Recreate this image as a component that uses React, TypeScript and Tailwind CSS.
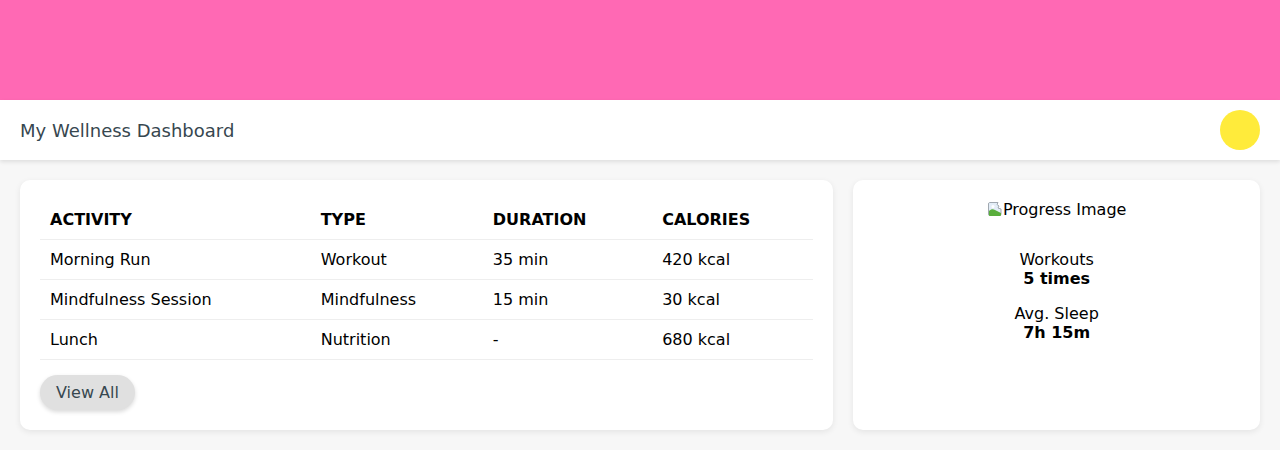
const rows = [
  { activity: 'Morning Run', type: 'Workout', duration: '35 min', calories: '420 kcal' },
  { activity: 'Mindfulness Session', type: 'Mindfulness', duration: '15 min', calories: '30 kcal' },
  { activity: 'Lunch', type: 'Nutrition', duration: '-', calories: '680 kcal' },
];

// broken image placeholder, like the browser shows for a missing img
function BrokenImage() {
  return (
    <svg width="16" height="16" viewBox="0 0 16 16" className="inline-block align-[-2px]">
      <path d="M2.5 1.5h8.5l-1 2 2 1.5-1 2 3 1V13a1.5 1.5 0 0 1-1.5 1.5H3A1.5 1.5 0 0 1 1.5 13V3A1.5 1.5 0 0 1 2.5 1.5z" fill="#e3edf7" stroke="#a0a8b0" strokeWidth="1" />
      <path d="M2 13.5V10c2-2 4-2.5 6-1l6 3v2a1 1 0 0 1-1 1H3a1 1 0 0 1-1-1.5z" fill="#5aae3c" />
      <circle cx="6" cy="5.5" r="1.5" fill="#ffffff" />
    </svg>
  );
}

export default function App() {
  return (
    <div className="min-h-[450px] bg-[#f7f7f7] font-['DejaVu_Sans',sans-serif] text-black text-[16px] leading-[normal]">
      <div className="h-[100px] bg-[#ff69b4]" />
      <header className="relative h-[60px] bg-white px-5 flex items-center justify-between shadow-[0_2px_4px_rgba(0,0,0,0.1)]">
        <h1 className="text-[18px] text-[#37474f]">My Wellness Dashboard</h1>
        <div className="w-10 h-10 rounded-full bg-[#ffeb3b]" />
      </header>

      <main className="grid grid-cols-[2fr_1fr] gap-5 p-5">
        {/* Activity table */}
        <section className="bg-white rounded-[10px] p-5 shadow-[0_2px_6px_rgba(0,0,0,0.08)]">
          <table className="w-full border-collapse text-left">
            <thead>
              <tr className="border-b border-[#eeeeee]">
                <th className="p-[10px] leading-[19px] font-bold uppercase">Activity</th>
                <th className="p-[10px] leading-[19px] font-bold uppercase">Type</th>
                <th className="p-[10px] leading-[19px] font-bold uppercase">Duration</th>
                <th className="p-[10px] leading-[19px] font-bold uppercase">Calories</th>
              </tr>
            </thead>
            <tbody>
              {rows.map(r => (
                <tr key={r.activity} className="border-b border-[#eeeeee]">
                  <td className="p-[10px] leading-[19px]">{r.activity}</td>
                  <td className="p-[10px] leading-[19px]">{r.type}</td>
                  <td className="p-[10px] leading-[19px]">{r.duration}</td>
                  <td className="p-[10px] leading-[19px]">{r.calories}</td>
                </tr>
              ))}
            </tbody>
          </table>
          <button className="mt-[15px] h-[35px] px-4 rounded-full bg-[#e0e0e0] text-[#37474f] shadow-[0_2px_4px_rgba(0,0,0,0.15)]">
            View All
          </button>
        </section>

        {/* Progress summary */}
        <section className="bg-white rounded-[10px] p-5 text-center shadow-[0_2px_6px_rgba(0,0,0,0.08)]">
          <div className="h-[20px] leading-[20px]">
            <BrokenImage />
            <span>Progress Image</span>
          </div>
          <div className="mt-[30px] leading-[19px]">
            <p>Workouts</p>
            <p className="font-bold">5 times</p>
          </div>
          <div className="mt-4 leading-[19px]">
            <p>Avg. Sleep</p>
            <p className="font-bold">7h 15m</p>
          </div>
        </section>
      </main>
    </div>
  );
}
